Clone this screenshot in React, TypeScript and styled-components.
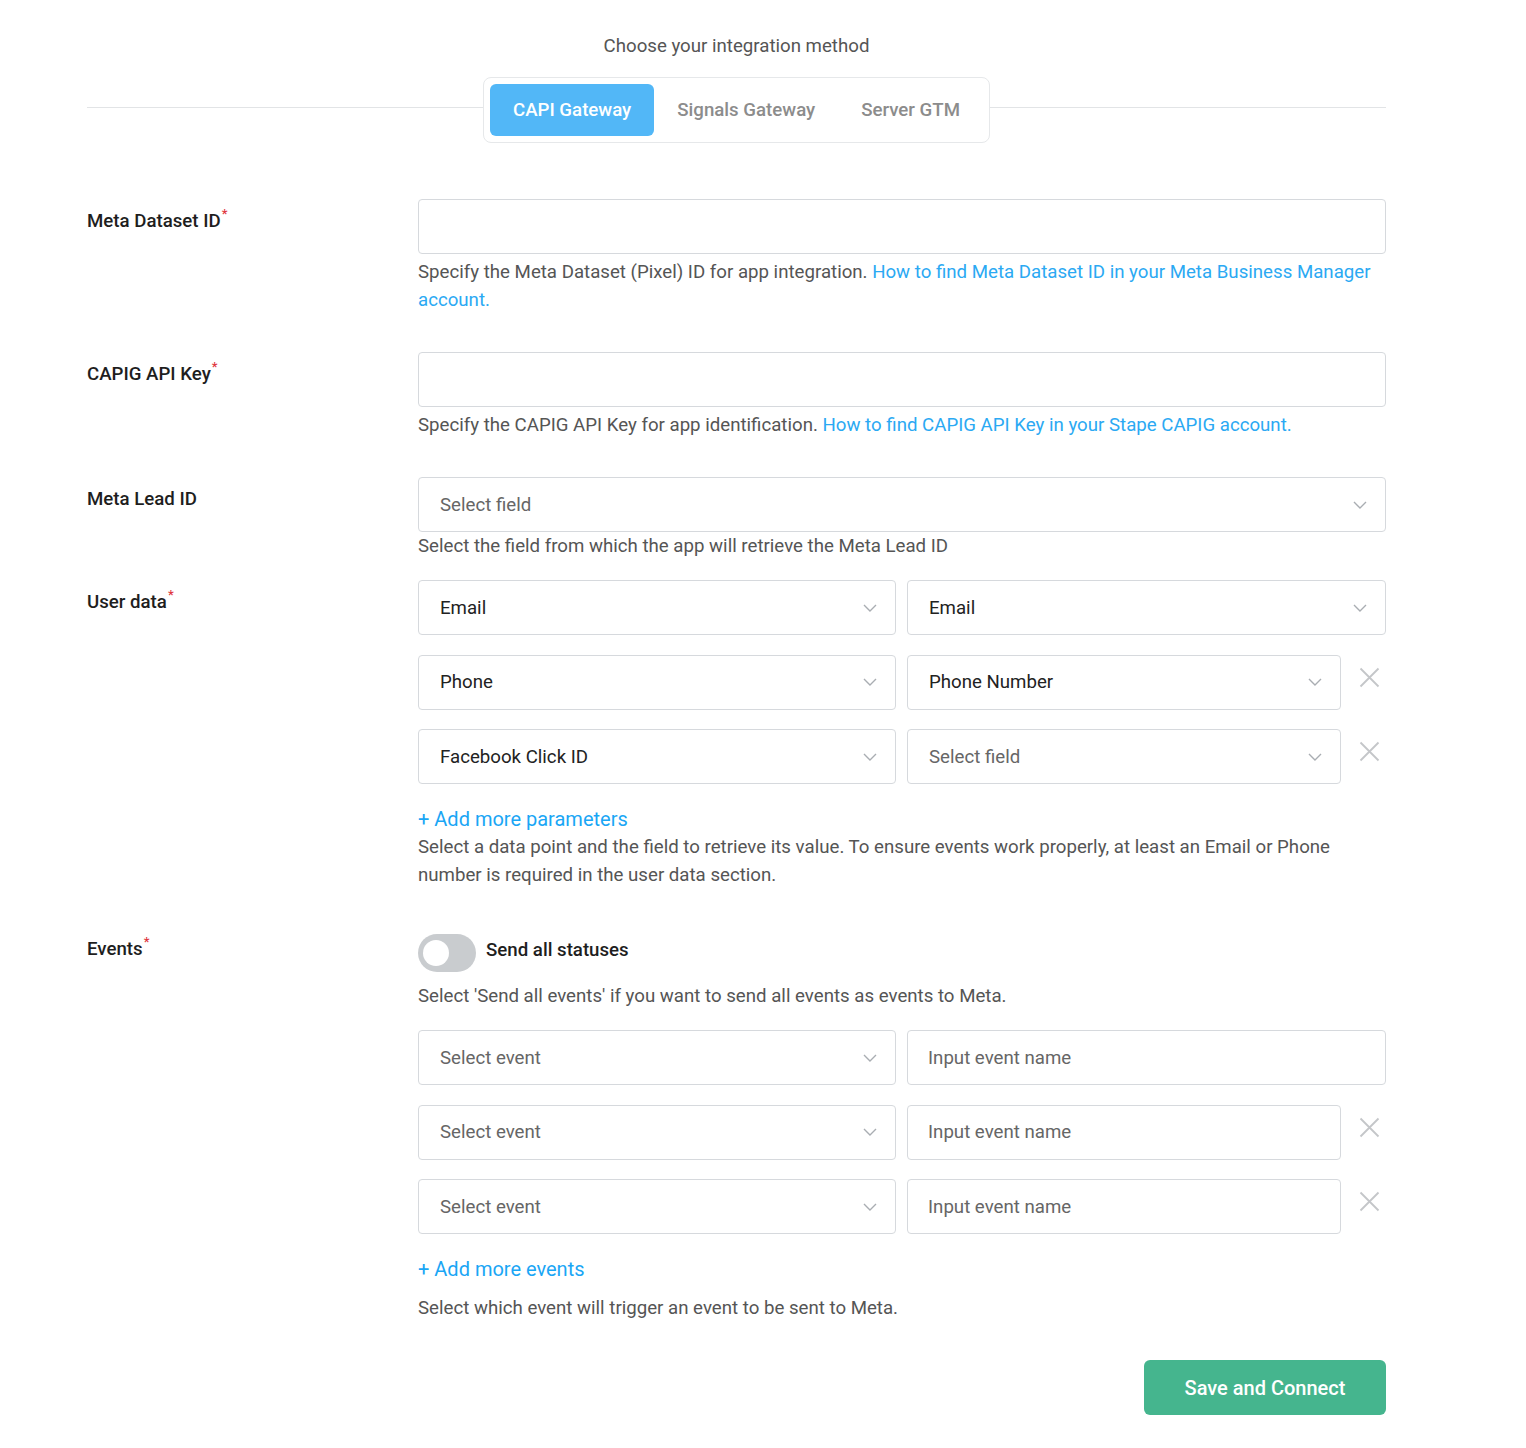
import React from 'react';
import styled, { createGlobalStyle } from 'styled-components';

const GlobalStyle = createGlobalStyle`
  body {
    margin: 0;
    background: #ffffff;
    font-family: Roboto, "Liberation Sans", Arial, sans-serif;
    color: #222;
  }
`;

// 14pt text, as in the reference
const BASE = '18.67px';

const Page = styled.div`
  width: 1299px;
  margin: 0 0 0 87px;
  padding: 32px 0 34px;
`;

const Heading = styled.div`
  text-align: center;
  font-size: ${BASE};
  line-height: 28px;
  color: #555;
`;

const TabsLine = styled.div`
  position: relative;
  display: flex;
  justify-content: center;
  margin-top: 17px;

  &::before {
    content: '';
    position: absolute;
    left: 0;
    right: 0;
    top: 30px;
    height: 1px;
    background: #e2e4e6;
  }
`;

const Tabs = styled.div`
  position: relative;
  display: flex;
  padding: 6px;
  background: #fff;
  border: 1px solid #e6e8ea;
  border-radius: 8px;
`;

const Tab = styled.button<{ $active?: boolean }>`
  height: 52px;
  padding: 0 23px;
  border: none;
  border-radius: 6px;
  font-family: inherit;
  font-size: ${BASE};
  font-weight: 500;
  background: ${({ $active }) => ($active ? '#52b7f7' : 'transparent')};
  color: ${({ $active }) => ($active ? '#fff' : '#8c8c8c')};
  cursor: pointer;
`;

const Form = styled.div`
  margin-top: 56px;
  display: flex;
  flex-direction: column;
`;

const Row = styled.div<{ $gap?: number }>`
  display: grid;
  grid-template-columns: 331px 968px;
  margin-top: ${({ $gap }) => ($gap ?? 38)}px;
  &:first-child {
    margin-top: 0;
  }
`;

const Label = styled.div`
  padding-top: 8px;
  font-size: ${BASE};
  line-height: 28px;
  font-weight: 500;
  color: #1e1e1e;
`;

const Req = styled.sup`
  color: #e0373f;
  font-size: 13px;
  line-height: 0;
  margin-left: 1px;
  vertical-align: 9px;
`;

const Field = styled.div`
  display: flex;
  flex-direction: column;
`;

const TextInput = styled.input`
  box-sizing: border-box;
  width: 100%;
  height: 55px;
  padding: 0 20px;
  border: 1px solid #d6d9dd;
  border-radius: 4px;
  font-family: inherit;
  font-size: ${BASE};
  color: #222;
  outline: none;
  &::placeholder {
    color: #666;
  }
`;

const Help = styled.div<{ $top?: number }>`
  margin-top: ${({ $top }) => $top ?? 0}px;
  font-size: ${BASE};
  line-height: 28px;
  color: #555;
`;

const Link = styled.a`
  color: #2ba9f3;
  text-decoration: none;
`;

const SelectBox = styled.div<{ $placeholder?: boolean }>`
  box-sizing: border-box;
  flex: 1 1 auto;
  height: 55px;
  display: flex;
  align-items: center;
  justify-content: space-between;
  padding: 0 18px 0 21px;
  border: 1px solid #d6d9dd;
  border-radius: 4px;
  font-size: ${BASE};
  color: ${({ $placeholder }) => ($placeholder ? '#666' : '#222')};
  min-width: 0;
`;

const PairRow = styled.div`
  display: flex;
  gap: 11px;
  & + & {
    margin-top: 19.5px;
  }
`;

const LeftCell = styled.div`
  width: 478px;
  flex: none;
  display: flex;
`;

const RemoveSlot = styled.div`
  width: 34px;
  flex: none;
  display: flex;
  justify-content: center;
  align-items: flex-start;
  padding-top: 12px;
`;

const AddLink = styled.a<{ $top?: number }>`
  margin-top: ${({ $top }) => $top ?? 21}px;
  font-size: 20px;
  line-height: 28px;
  color: #1aa6f5;
  text-decoration: none;
`;

const ToggleRow = styled.label`
  display: flex;
  align-items: center;
  gap: 10px;
  margin-top: 7px;
  font-size: ${BASE};
  font-weight: 500;
  color: #1e1e1e;
  line-height: 28px;
`;

const Toggle = styled.span`
  position: relative;
  width: 58px;
  height: 38px;
  border-radius: 19px;
  background: #c9cccf;
  flex: none;

  &::after {
    content: '';
    position: absolute;
    left: 5px;
    top: 6px;
    width: 26px;
    height: 26px;
    border-radius: 50%;
    background: #fff;
  }
`;

const ToggleText = styled.span`
  margin-top: -6px;
`;

const Footer = styled.div`
  display: flex;
  justify-content: flex-end;
  margin-top: 38px;
`;

const SaveButton = styled.button`
  width: 242px;
  height: 55px;
  border: none;
  border-radius: 6px;
  background: #45b58e;
  color: #fff;
  font-family: inherit;
  font-size: 20px;
  font-weight: 500;
  cursor: pointer;
`;

const Chevron = () => (
  <svg width="14" height="8" viewBox="0 0 14 8" fill="none">
    <path d="M1 1l6 6 6-6" stroke="#a9adb2" strokeWidth="1.4" />
  </svg>
);

const Close = () => (
  <svg width="21" height="21" viewBox="0 0 21 21" fill="none">
    <path d="M1.5 1.5l18 18M19.5 1.5l-18 18" stroke="#c4c6c9" strokeWidth="1.8" />
  </svg>
);

const Select = ({ value, placeholder }: { value?: string; placeholder?: string }) => (
  <SelectBox $placeholder={!value}>
    <span>{value || placeholder}</span>
    <Chevron />
  </SelectBox>
);

type Pair = { left?: string; leftPh: string; right?: string; rightPh: string; removable: boolean; rightInput?: boolean };

const userRows: Pair[] = [
  { left: 'Email', leftPh: 'Select field', right: 'Email', rightPh: 'Select field', removable: false },
  { left: 'Phone', leftPh: 'Select field', right: 'Phone Number', rightPh: 'Select field', removable: true },
  { left: 'Facebook Click ID', leftPh: 'Select field', rightPh: 'Select field', removable: true },
];

const eventRows: Pair[] = [
  { leftPh: 'Select event', rightPh: 'Input event name', removable: false, rightInput: true },
  { leftPh: 'Select event', rightPh: 'Input event name', removable: true, rightInput: true },
  { leftPh: 'Select event', rightPh: 'Input event name', removable: true, rightInput: true },
];

const PairList = ({ rows }: { rows: Pair[] }) => (
  <div>
    {rows.map((r, i) => (
      <PairRow key={i}>
        <LeftCell>
          <Select value={r.left} placeholder={r.leftPh} />
        </LeftCell>
        {r.rightInput ? (
          <TextInput placeholder={r.rightPh} />
        ) : (
          <Select value={r.right} placeholder={r.rightPh} />
        )}
        {r.removable && (
          <RemoveSlot>
            <Close />
          </RemoveSlot>
        )}
      </PairRow>
    ))}
  </div>
);

export default function App() {
  return (
    <>
      <GlobalStyle />
      <Page>
        <Heading>Choose your integration method</Heading>
        <TabsLine>
          <Tabs>
            <Tab $active>CAPI Gateway</Tab>
            <Tab>Signals Gateway</Tab>
            <Tab>Server GTM</Tab>
          </Tabs>
        </TabsLine>

        <Form>
          <Row>
            <Label>
              Meta Dataset ID<Req>*</Req>
            </Label>
            <Field>
              <TextInput />
              <Help $top={4}>
                Specify the Meta Dataset (Pixel) ID for app integration.{' '}
                <Link href="#">How to find Meta Dataset ID in your Meta Business Manager account.</Link>
              </Help>
            </Field>
          </Row>

          <Row>
            <Label>
              CAPIG API Key<Req>*</Req>
            </Label>
            <Field>
              <TextInput />
              <Help $top={4}>
                Specify the CAPIG API Key for app identification.{' '}
                <Link href="#">How to find CAPIG API Key in your Stape CAPIG account.</Link>
              </Help>
            </Field>
          </Row>

          <Row>
            <Label>Meta Lead ID</Label>
            <Field>
              <Select placeholder="Select field" />
              <Help>Select the field from which the app will retrieve the Meta Lead ID</Help>
            </Field>
          </Row>

          <Row $gap={20}>
            <Label>
              User data<Req>*</Req>
            </Label>
            <Field>
              <PairList rows={userRows} />
              <AddLink href="#">+ Add more parameters</AddLink>
              <Help>
                Select a data point and the field to retrieve its value. To ensure events work properly, at least an Email or Phone
                number is required in the user data section.
              </Help>
            </Field>
          </Row>

          <Row>
            <Label>
              Events<Req>*</Req>
            </Label>
            <Field>
              <ToggleRow>
                <Toggle />
                <ToggleText>Send all statuses</ToggleText>
              </ToggleRow>
              <Help $top={10}>Select 'Send all events' if you want to send all events as events to Meta.</Help>
              <div style={{ height: 20 }} />
              <PairList rows={eventRows} />
              <AddLink href="#">+ Add more events</AddLink>
              <Help $top={11}>Select which event will trigger an event to be sent to Meta.</Help>
            </Field>
          </Row>
        </Form>

        <Footer>
          <SaveButton>Save and Connect</SaveButton>
        </Footer>
      </Page>
    </>
  );
}
